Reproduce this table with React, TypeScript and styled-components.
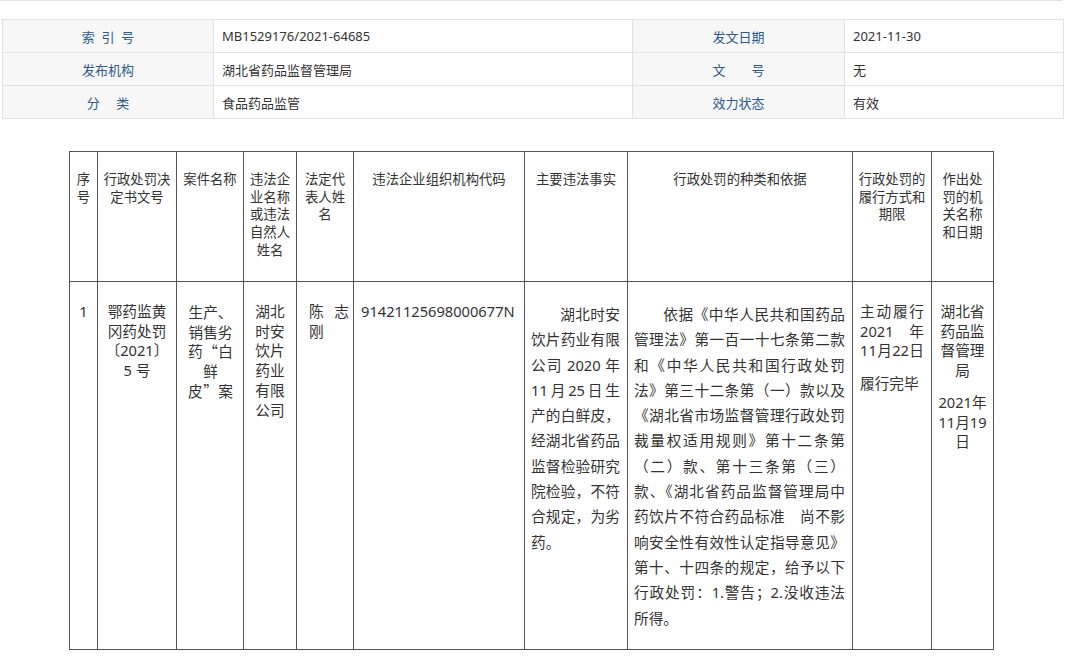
import React from 'react';
import styled, { createGlobalStyle } from 'styled-components';

const GlobalStyle = createGlobalStyle`
  html, body { margin: 0; padding: 0; background: #ffffff; }
  body {
    font-family: "Noto Sans", "Noto Sans CJK SC", sans-serif;
    color: #333333;
  }
`;

const Page = styled.div`
  width: 1080px;
  display: flex;
  flex-direction: column;
  align-items: flex-start;
`;

const TopRule = styled.div`
  width: 1062px;
  height: 1px;
  background: #e2e2e2;
`;

const InfoTable = styled.table`
  margin: 18px 0 0 2px;
  width: 1061px;
  border-collapse: collapse;
  table-layout: fixed;
  font-size: 13px;
`;

const InfoLabel = styled.th`
  background: #f7f7f7;
  color: #2e5a8a;
  font-weight: normal;
  text-align: center;
  white-space: pre;
  border: 1px solid #e2e2e2;
  height: 32px;
  padding: 0;
`;

const InfoValue = styled.td`
  color: #333333;
  border: 1px solid #e2e2e2;
  padding: 0 8px;
  height: 32px;
`;

const MainTable = styled.table`
  margin: 32px 0 0 69px;
  width: 925px;
  border-collapse: collapse;
  table-layout: fixed;
`;

const HeadCell = styled.th`
  border: 1px solid #555555;
  font-weight: normal;
  font-size: 13.33px;
  line-height: 17.7px;
  color: #333333;
  text-align: center;
  vertical-align: top;
  padding: 19px 0 0;
  height: 110px;
`;

const BodyCell = styled.td<{ $lh?: number; $pl?: number; $pr?: number; $align?: string; $cjk?: boolean }>`
  border: 1px solid #555555;
  font-size: 14.67px;
  line-height: ${(p) => p.$lh ?? 19.7}px;
  color: #333333;
  vertical-align: top;
  text-align: ${(p) => p.$align ?? 'center'};
  padding: 20px ${(p) => p.$pr ?? 7}px 0 ${(p) => p.$pl ?? 7}px;
  height: 347px;
  word-break: keep-all;
  ${(p) => (p.$cjk ? 'font-family: "Noto Sans CJK SC", sans-serif;' : '')}
`;

const Para = styled.div<{ $gap?: number }>`
  margin-top: ${(p) => p.$gap ?? 0}px;
`;

type Mode = 'center' | 'left' | 'justify';

const Line = styled.div<{ $mode?: Mode; $indent?: boolean }>`
  word-break: keep-all;
  text-align: ${(p) => (p.$mode === 'justify' ? 'justify' : p.$mode ?? 'inherit')};
  text-align-last: ${(p) => (p.$mode === 'justify' ? 'justify' : 'auto')};
  text-indent: ${(p) => (p.$indent ? '2em' : '0')};
`;

interface LineSpec {
  text: string;
  mode?: Mode;
  indent?: boolean;
}

const Lines: React.FC<{ lines: LineSpec[] }> = ({ lines }) => (
  <>
    {lines.map((l, i) => (
      <Line key={i} $mode={l.mode} $indent={l.indent}>
        {l.text}
      </Line>
    ))}
  </>
);

const mainCols = [28, 79, 67, 53, 57, 171, 103, 225, 79, 62];

const headers: string[][] = [
  ['序', '号'],
  ['行政处罚决', '定书文号'],
  ['案件名称'],
  ['违法企', '业名称', '或违法', '自然人', '姓名'],
  ['法定代', '表人姓', '名'],
  ['违法企业组织机构代码'],
  ['主要违法事实'],
  ['行政处罚的种类和依据'],
  ['行政处罚的', '履行方式和', '期限'],
  ['作出处', '罚的机', '关名称', '和日期'],
];

const j = (text: string, indent = false): LineSpec => ({ text, mode: 'justify', indent });
const c = (text: string): LineSpec => ({ text, mode: 'center' });
const l = (text: string): LineSpec => ({ text, mode: 'left' });

const factLines: LineSpec[] = [
  j('湖北时安', true),
  j('饮片药业有限'),
  j('公司 2020 年'),
  j('11月25日生'),
  j('产的白鲜皮，'),
  j('经湖北省药品'),
  j('监督检验研究'),
  j('院检验，不符'),
  j('合规定，为劣'),
  l('药。'),
];

const basisLines: LineSpec[] = [
  j('依据《中华人民共和国药品', true),
  j('管理法》第一百一十七条第二款'),
  j('和《中华人民共和国行政处罚'),
  j('法》第三十二条第（一）款以及'),
  j('《湖北省市场监督管理行政处罚'),
  j('裁量权适用规则》第十二条第'),
  j('（二）款、第十三条第（三）'),
  j('款、《湖北省药品监督管理局中'),
  j('药饮片不符合药品标准　尚不影'),
  j('响安全性有效性认定指导意见》'),
  j('第十、十四条的规定，给予以下'),
  j('行政处罚：1.警告；2.没收违法'),
  l('所得。'),
];

const infoRows: [string, string, string, string][] = [
  ['索  引  号', 'MB1529176/2021-64685', '发文日期', '2021-11-30'],
  ['发布机构', '湖北省药品监督管理局', '文　　号', '无'],
  ['分　 类', '食品药品监管', '效力状态', '有效'],
];

export default function App() {
  return (
    <>
      <GlobalStyle />
      <Page>
        <TopRule />
        <InfoTable>
          <colgroup>
            <col style={{ width: 211 }} />
            <col style={{ width: 419 }} />
            <col style={{ width: 212 }} />
            <col style={{ width: 219 }} />
          </colgroup>
          <tbody>
            {infoRows.map((r, i) => (
              <tr key={i}>
                <InfoLabel>{r[0]}</InfoLabel>
                <InfoValue>{r[1]}</InfoValue>
                <InfoLabel>{r[2]}</InfoLabel>
                <InfoValue>{r[3]}</InfoValue>
              </tr>
            ))}
          </tbody>
        </InfoTable>

        <MainTable>
          <colgroup>
            {mainCols.map((w, i) => (
              <col key={i} style={{ width: w }} />
            ))}
          </colgroup>
          <thead>
            <tr>
              {headers.map((h, i) => (
                <HeadCell key={i}>
                  {h.map((t, k) => (
                    <div key={k}>{t}</div>
                  ))}
                </HeadCell>
              ))}
            </tr>
          </thead>
          <tbody>
            <tr>
              <BodyCell $pl={2} $pr={2}>1</BodyCell>
              <BodyCell $pl={4} $pr={4}>
                <Lines lines={[c('鄂药监黄'), c('冈药处罚'), c('〔2021〕'), c('5 号')]} />
              </BodyCell>
              <BodyCell $pl={11} $pr={10} $cjk>
                <Lines lines={[c('生产、'), c('销售劣'), j('药“白'), c('鲜'), j('皮”案')]} />
              </BodyCell>
              <BodyCell $pl={4} $pr={4}>
                <Lines lines={[c('湖北'), c('时安'), c('饮片'), c('药业'), c('有限'), c('公司')]} />
              </BodyCell>
              <BodyCell $pl={12} $pr={4} $align="left">
                <Lines lines={[j('陈 志'), l('刚')]} />
              </BodyCell>
              <BodyCell $pl={7} $pr={4} $align="left">
                91421125698000677N
              </BodyCell>
              <BodyCell $lh={25.3} $pl={6} $pr={7} $align="left">
                <Lines lines={factLines} />
              </BodyCell>
              <BodyCell $lh={25.3} $pl={6} $pr={7} $align="left">
                <Lines lines={basisLines} />
              </BodyCell>
              <BodyCell $pl={7} $pr={7} $align="left">
                <Para>
                  <Lines lines={[j('主动履行'), j('2021 年'), j('11月22日')]} />
                </Para>
                <Para $gap={13}>
                  <Lines lines={[l('履行完毕')]} />
                </Para>
              </BodyCell>
              <BodyCell $pl={6} $pr={6}>
                <Para>
                  <Lines lines={[c('湖北省'), c('药品监'), c('督管理'), c('局')]} />
                </Para>
                <Para $gap={12}>
                  <Lines lines={[c('2021年'), c('11月19'), c('日')]} />
                </Para>
              </BodyCell>
            </tr>
          </tbody>
        </MainTable>
      </Page>
    </>
  );
}
